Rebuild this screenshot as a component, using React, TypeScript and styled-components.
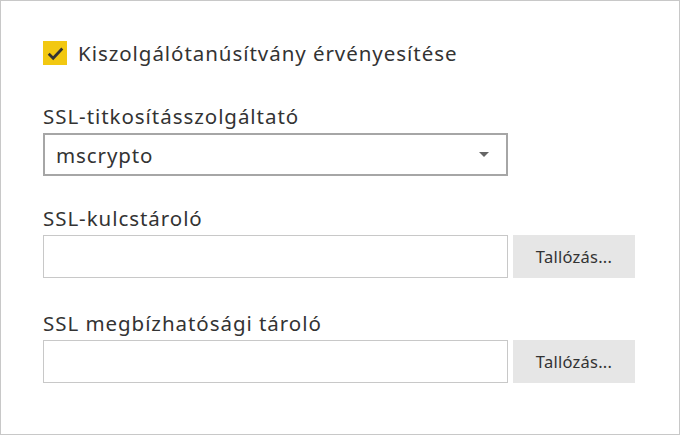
import React from "react";
import styled, { createGlobalStyle } from "styled-components";

const GlobalStyle = createGlobalStyle`
  html, body {
    margin: 0;
    padding: 0;
    background: #fff;
  }
  body {
    font-family: "Noto Sans", "Open Sans", sans-serif;
    color: #333;
  }
`;

const Panel = styled.div`
  box-sizing: border-box;
  width: 680px;
  height: 435px;
  border: 1px solid #c8c8c8;
  padding: 38px 42px 0 42px;
  display: flex;
  flex-direction: column;
`;

const CheckRow = styled.label`
  display: flex;
  align-items: center;
  gap: 11px;
  height: 28px;
  font-size: 20.5px;
  letter-spacing: 0.95px;
  color: #333;
`;

const CheckBox = styled.span`
  width: 24px;
  height: 24px;
  background: #f2c811;
  display: flex;
  align-items: center;
  justify-content: center;
`;

const Field = styled.div<{ $top: number }>`
  display: flex;
  flex-direction: column;
  margin-top: ${(p) => p.$top}px;
`;

const Label = styled.div`
  font-size: 20.5px;
  letter-spacing: 0.95px;
  line-height: 28px;
  color: #333;
  margin-bottom: 3px;
`;

const Row = styled.div`
  display: flex;
  gap: 5px;
`;

const Select = styled.div`
  box-sizing: border-box;
  width: 465px;
  height: 43px;
  border: 2px solid #a6a6a6;
  display: flex;
  align-items: center;
  justify-content: space-between;
  padding: 0 17px 0 11px;
  font-size: 20.5px;
  letter-spacing: 0.9px;
  color: #333;
`;

const Caret = styled.span`
  width: 0;
  height: 0;
  border-left: 5px solid transparent;
  border-right: 5px solid transparent;
  border-top: 5px solid #666;
`;

const TextBox = styled.div`
  box-sizing: border-box;
  width: 465px;
  height: 43px;
  border: 1.5px solid #c8c8c8;
  background: #fff;
`;

const Browse = styled.button`
  width: 122px;
  height: 43px;
  border: none;
  background: #e6e6e6;
  font-family: "Noto Sans", "Open Sans", sans-serif;
  font-size: 16.5px;
  letter-spacing: 0.25px;
  color: #333;
  padding: 0;
`;

export default function App() {
  return (
    <>
      <GlobalStyle />
      <Panel>
        <CheckRow>
          <CheckBox>
            <svg width="17" height="17" viewBox="0 0 16 16">
              <path d="M1.6 8.3 L5.8 12.4 L14.4 3.3" fill="none" stroke="#333" strokeWidth="2.6" />
            </svg>
          </CheckBox>
          Kiszolgálótanúsítvány érvényesítése
        </CheckRow>
        <Field $top={35}>
          <Label>SSL-titkosításszolgáltató</Label>
          <Select>
            mscrypto
            <Caret />
          </Select>
        </Field>
        <Field $top={28}>
          <Label>SSL-kulcstároló</Label>
          <Row>
            <TextBox />
            <Browse>Tallózás...</Browse>
          </Row>
        </Field>
        <Field $top={31}>
          <Label>SSL megbízhatósági tároló</Label>
          <Row>
            <TextBox />
            <Browse>Tallózás...</Browse>
          </Row>
        </Field>
      </Panel>
    </>
  );
}
